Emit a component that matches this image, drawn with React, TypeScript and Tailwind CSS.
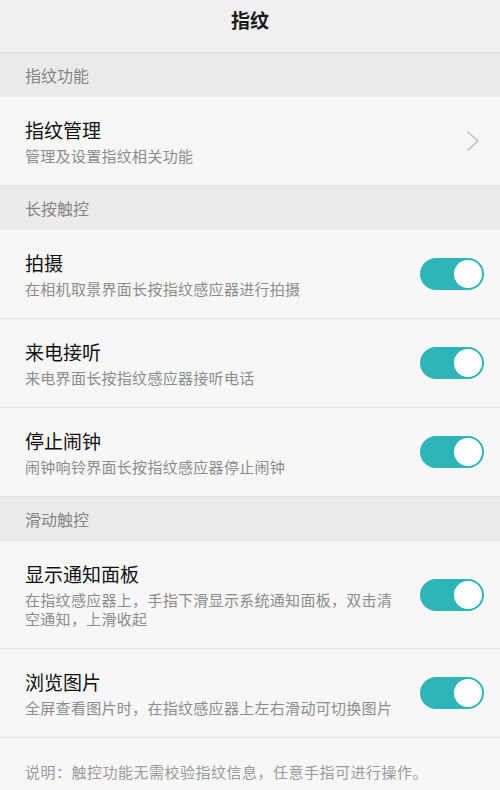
import React from 'react';

type Item = { title: string; desc: string; toggle?: boolean };

const sections: { label: string; items: Item[] }[] = [
  { label: '指纹功能', items: [{ title: '指纹管理', desc: '管理及设置指纹相关功能' }] },
  {
    label: '长按触控',
    items: [
      { title: '拍摄', desc: '在相机取景界面长按指纹感应器进行拍摄', toggle: true },
      { title: '来电接听', desc: '来电界面长按指纹感应器接听电话', toggle: true },
      { title: '停止闹钟', desc: '闹钟响铃界面长按指纹感应器停止闹钟', toggle: true },
    ],
  },
  {
    label: '滑动触控',
    items: [
      { title: '显示通知面板', desc: '在指纹感应器上，手指下滑显示系统通知面板，双击清空通知，上滑收起', toggle: true },
      { title: '浏览图片', desc: '全屏查看图片时，在指纹感应器上左右滑动可切换图片', toggle: true },
    ],
  },
];

function Toggle() {
  return (
    <div className="flex h-[32px] w-[64px] shrink-0 items-center justify-end rounded-full bg-[#2db5b8] pr-[2px]">
      <div className="h-[28px] w-[28px] rounded-full bg-white" />
    </div>
  );
}

function Chevron() {
  return (
    <svg width="14" height="22" viewBox="0 0 14 22" className="mr-[4px] shrink-0">
      <path d="M1.5 1.5 L12 11 L1.5 20.5" fill="none" stroke="#bdbdbd" strokeWidth="1.4" />
    </svg>
  );
}

export default function App() {
  return (
    <div
      className="min-h-[790px] w-[500px] bg-[#f7f7f7]"
      style={{ fontFamily: '"Noto Sans CJK SC", "Noto Sans", sans-serif' }}
    >
      {/* HEADER */}
      <div className="h-[53px] border-b border-[#dcdcdc] bg-[#f0f0f0] pt-[6px] text-center text-[19px] font-bold leading-[28px] text-[#1a1a1a]">
        指纹
      </div>

      {sections.map((s) => (
        <div key={s.label}>
          <div className="flex h-[44px] items-center bg-[#ebebeb] px-[25px] text-[16px] text-[#858585]">
            {s.label}
          </div>
          {s.items.map((it) => (
            <div
              key={it.title}
              className="flex items-center justify-between border-b border-[#e4e4e4] py-[20px] pl-[25px] pr-[16px]"
            >
              <div className="w-[372px]">
                <div className="text-[19px] leading-[26px] text-[#111]">{it.title}</div>
                <div className="mt-[3px] text-[15px] leading-[19px] tracking-[0.3px] text-[#8c8c8c]">
                  {it.desc}
                </div>
              </div>
              {it.toggle ? <Toggle /> : <Chevron />}
            </div>
          ))}
        </div>
      ))}

      {/* FOOTER NOTE */}
      <div className="px-[25px] pb-[8px] pt-[22px] text-[15px] leading-[24px] tracking-[0.5px] text-[#9a9a9a]">
        说明：触控功能无需校验指纹信息，任意手指可进行操作。
      </div>
    </div>
  );
}
